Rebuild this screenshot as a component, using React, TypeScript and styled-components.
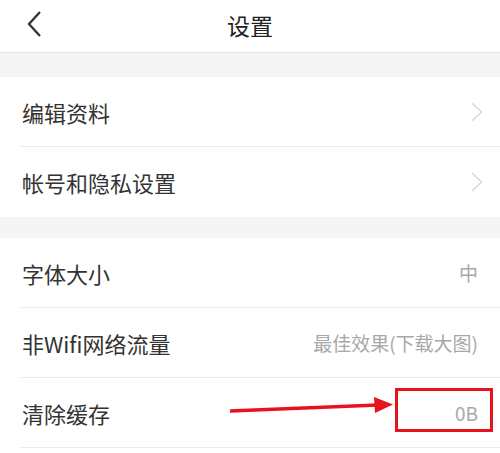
import React from "react";
import styled, { createGlobalStyle } from "styled-components";

const Global = createGlobalStyle`
  html, body { margin: 0; padding: 0; background: #ffffff; }
  body { font-family: "Noto Sans CJK SC", "Noto Sans", sans-serif; -webkit-font-smoothing: antialiased; }
  * { box-sizing: border-box; }
`;

const Page = styled.div`
  width: 500px;
  height: 453px;
  overflow: hidden;
  background: #f4f5f7;
  display: flex;
  flex-direction: column;
`;

const Header = styled.header`
  height: 53px;
  flex: none;
  background: #fff;
  border-bottom: 1px solid #e4e4e6;
  display: flex;
  align-items: center;
  justify-content: center;
  position: relative;
`;

const BackButton = styled.button`
  position: absolute;
  left: 22px;
  top: 9px;
  width: 24px;
  height: 30px;
  border: 0;
  padding: 0;
  background: none;
  display: flex;
  align-items: center;
  justify-content: center;
`;

const Title = styled.h1`
  margin: 0;
  font-size: 23px;
  font-weight: 400;
  color: #222;
  line-height: 1;
  margin-top: -2px;
`;

const Gap = styled.div<{ $h: number }>`
  height: ${(p) => p.$h}px;
  flex: none;
`;

const Group = styled.section`
  background: #fff;
  display: flex;
  flex-direction: column;
  flex: none;
`;

const Row = styled.div<{ $sep?: boolean }>`
  height: 70px;
  padding: 0 16px 1px 22px;
  display: flex;
  align-items: center;
  justify-content: space-between;
  position: relative;
  &::after {
    content: "";
    display: ${(p) => (p.$sep ? "block" : "none")};
    position: absolute;
    left: 20px;
    right: 0;
    bottom: 0;
    height: 1px;
    background: #ececee;
  }
`;

const Label = styled.span`
  font-size: 22px;
  color: #333;
  line-height: 1;
`;

const Value = styled.span`
  font-size: 19px;
  color: #a8a8a8;
  line-height: 1;
  margin-right: 6px;
`;

const Highlight = styled.div`
  position: absolute;
  left: 395px;
  top: 10px;
  width: 98px;
  height: 44px;
  border: 3px solid #e8121c;
`;

const ArrowSvg = styled.svg`
  position: absolute;
  left: 226px;
  top: 18px;
`;

const Tail = styled.div`
  flex: 1;
  background: #fff;
`;

const Chevron = () => (
  <svg width="14" height="22" viewBox="0 0 14 22">
    <path d="M2 2 L11.5 11 L2 20" fill="none" stroke="#d9d9db" strokeWidth="1.6" />
  </svg>
);

export default function App() {
  return (
    <>
      <Global />
      <Page>
        <Header>
          <BackButton aria-label="返回">
            <svg width="18" height="28" viewBox="0 0 18 28">
              <path d="M15 2 L4 14 L15 26" fill="none" stroke="#333" strokeWidth="2.3" />
            </svg>
          </BackButton>
          <Title>设置</Title>
        </Header>
        <Gap $h={24} />
        <Group>
          <Row $sep>
            <Label>编辑资料</Label>
            <Chevron />
          </Row>
          <Row>
            <Label>帐号和隐私设置</Label>
            <Chevron />
          </Row>
        </Group>
        <Gap $h={21} />
        <Group>
          <Row $sep>
            <Label>字体大小</Label>
            <Value>中</Value>
          </Row>
          <Row $sep>
            <Label>非Wifi网络流量</Label>
            <Value>最佳效果(下载大图)</Value>
          </Row>
          <Row $sep>
            <Label>清除缓存</Label>
            <Value>0B</Value>
            <ArrowSvg width="170" height="24" viewBox="0 0 170 24">
              <path d="M4 15 L152 9" stroke="#e8121c" strokeWidth="3.5" fill="none" />
              <path d="M148 1 L167 8.5 L149 17 Z" fill="#e8121c" />
            </ArrowSvg>
            <Highlight />
          </Row>
        </Group>
        <Tail />
      </Page>
    </>
  );
}
